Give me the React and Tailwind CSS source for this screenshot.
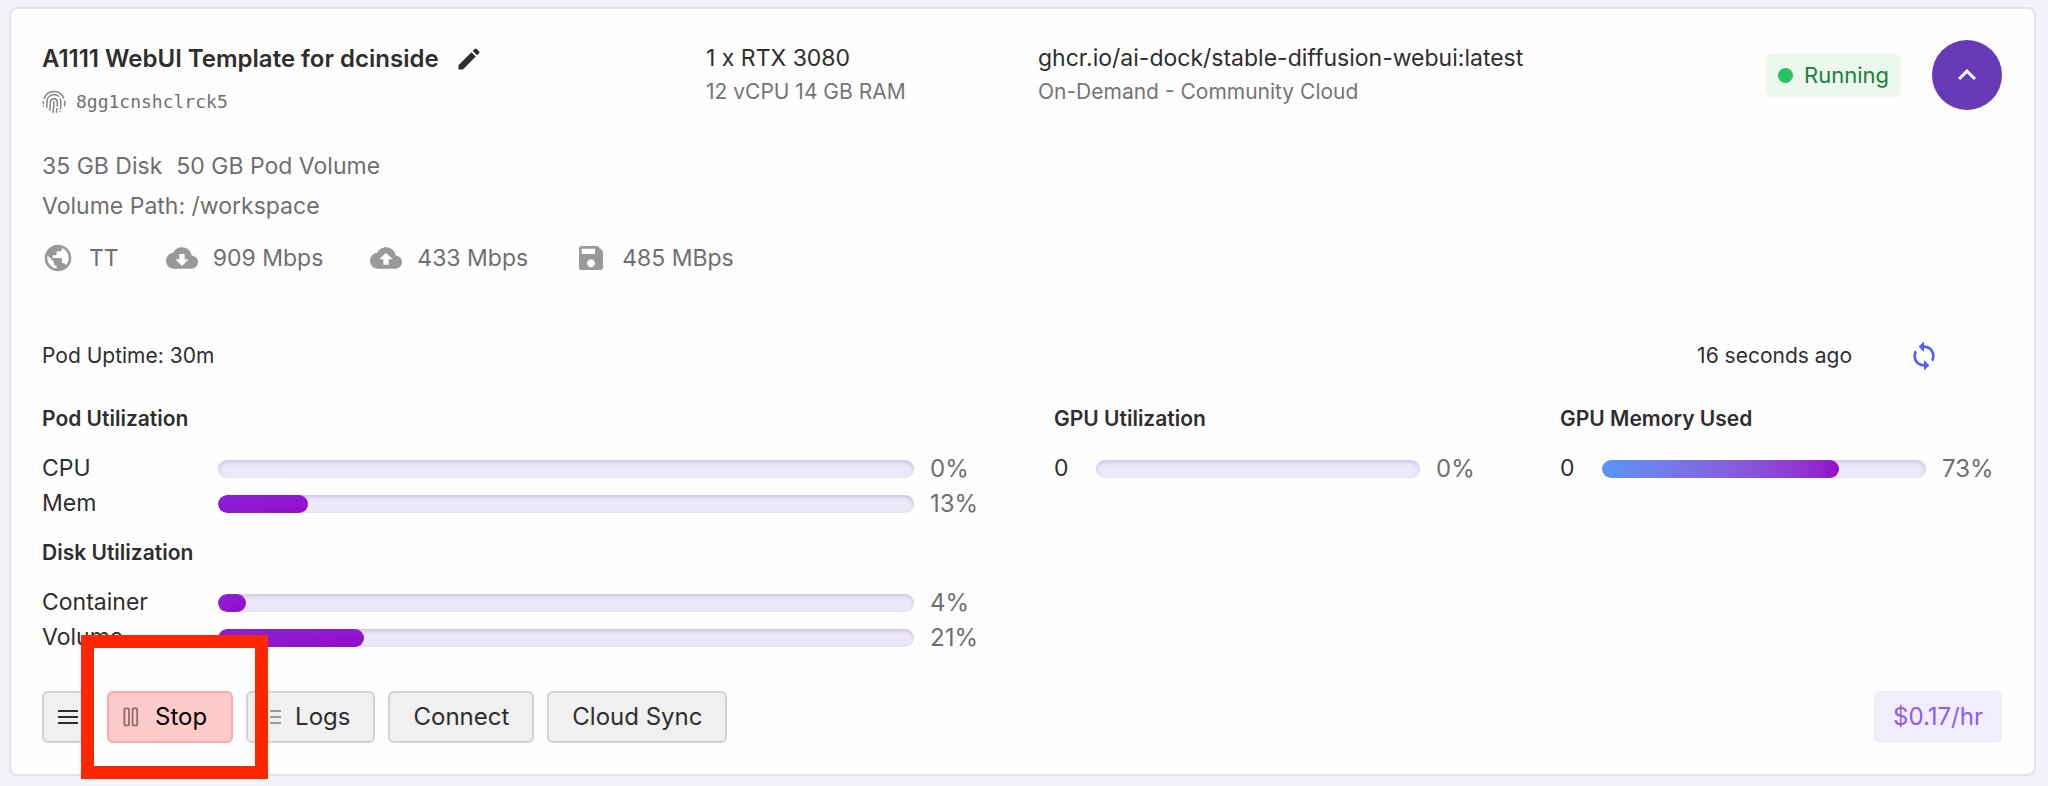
import {
  MdEdit,
  MdPublic,
  MdCloudDownload,
  MdBackup,
  MdSave,
  MdSync,
  MdKeyboardArrowUp,
} from 'react-icons/md';

const network = [
  { icon: MdPublic, text: 'TT' },
  { icon: MdCloudDownload, text: '909 Mbps' },
  { icon: MdBackup, text: '433 Mbps' },
  { icon: MdSave, text: '485 MBps' },
];

const podUsage = [
  { label: 'CPU', value: 0 },
  { label: 'Mem', value: 13 },
];

const diskUsage = [
  { label: 'Container', value: 4 },
  { label: 'Volume', value: 21 },
];

function FingerprintIcon() {
  return (
    <svg
      viewBox="0 0 24 24"
      className="size-6 text-[#858585]"
      fill="none"
      stroke="currentColor"
      strokeWidth="1.5"
      strokeLinecap="round"
      aria-hidden="true"
    >
      <path d="M2.2 8.4A10.4 10.4 0 0 1 21.6 8" />
      <path d="M22.8 11.2c.2 1.600.1 3-.1 4.600" />
      <path d="M1.300 11.800v1.400M1.300 15.800v.2" />
      <path d="M4.600 17.600c.7-2 .3-4 .5-6.200A6.900 6.900 0 0 1 16.600 6.300" />
      <path d="M18.500 9c.8 3.300.5 6.600-.1 9.800M18 21.400v.2" />
      <path d="M7.600 20.200c1-2.900.6-5.900.9-8.700a3.400 3.400 0 0 1 6.700 0c.1 1.500.1 3 0 4.500M14.900 18.600c-.1 1.200-.3 2.400-.6 3.600" />
      <path d="M11.900 11.800c.1 3.800-.1 7-1 10.600" />
    </svg>
  );
}

function MenuIcon() {
  return (
    <svg viewBox="0 0 20 16" className="w-5 h-4 shrink-0" stroke="currentColor" strokeWidth="2" aria-hidden="true">
      <path d="M0 2h20M0 8h20M0 14h20" />
    </svg>
  );
}

function PauseIcon() {
  return (
    <svg viewBox="0 0 16 20" className="w-4 h-5 text-[#8f6a6a]" fill="none" stroke="currentColor" strokeWidth="1.8" aria-hidden="true">
      <rect x="1.4" y="1.4" width="4.6" height="17" rx="1" />
      <rect x="9.6" y="1.4" width="4.6" height="17" rx="1" />
    </svg>
  );
}

function ListIcon() {
  return (
    <svg viewBox="0 0 20 16" className="w-5 h-4 text-[#999999]" stroke="currentColor" strokeWidth="1.8" aria-hidden="true">
      <path d="M1 2h3M1 8h3M1 14h3M9 2h11M9 8h11M9 14h11" />
    </svg>
  );
}

function UsageTitle({ children }) {
  return <h2 className="mb-4 text-[21px] leading-8 font-semibold">{children}</h2>;
}

function UsageBar({ label, value, labelClass = 'w-44', fill = 'bg-linear-to-br from-[#8a22d4] to-[#9508cb]' }) {
  return (
    <div className="flex items-center h-[35px]">
      <span className={`${labelClass} shrink-0 text-[23px]`}>{label}</span>
      <div className="flex-1 h-[18px] rounded-full bg-[#ede8f7] shadow-[inset_0_2px_4px_#cdc2e4] overflow-hidden">
        <div className={`h-full rounded-full ${fill}`} style={{ width: `${value}%` }} />
      </div>
      <span className="w-[76px] shrink-0 pl-4 text-2xl text-[#6f6f6f]">{value}%</span>
    </div>
  );
}

function ActionButton({ children, label, colors = 'bg-[#f0f0f0] border-[#d2d2d2]', spacing = 'px-[23px]' }) {
  return (
    <button
      type="button"
      aria-label={label}
      className={`flex items-center h-[52px] rounded-md border-2 text-2xl ${colors} ${spacing}`}
    >
      {children}
    </button>
  );
}

export default function App() {
  return (
    <main className="min-h-screen bg-[#f3f4f9] pl-[9px] pr-3 pt-[7px] pb-[9px] font-[Inter,sans-serif] text-[#2e2e2e]">
      <article className="rounded-lg border-2 border-[#e2e3e6] bg-[#fefefe] pl-[31px] pr-8 py-[31px]">
        <header className="grid grid-cols-12 gap-8">
          <div className="col-span-4">
            <div className="flex items-center gap-4 h-[38px]">
              <h1 className="text-2xl font-semibold whitespace-nowrap">A1111 WebUI Template for dcinside</h1>
              <button type="button" aria-label="Edit name">
                <MdEdit className="size-7" />
              </button>
            </div>
            <div className="flex items-center gap-[10px] mt-2 h-8 text-[#6f6f6f]">
              <FingerprintIcon />
              <span className="font-['DejaVu_Sans_Mono',monospace] text-lg">8gg1cnshclrck5</span>
            </div>
          </div>
          <div className="col-span-2">
            <p className="text-[23px] leading-9">1 x RTX 3080</p>
            <p className="text-[21px] leading-8 text-[#757575]">12 vCPU 14 GB RAM</p>
          </div>
          <div className="col-span-4">
            <p className="text-[23px] leading-9">ghcr.io/ai-dock/stable-diffusion-webui:latest</p>
            <p className="text-[21px] leading-8 text-[#757575]">On-Demand - Community Cloud</p>
          </div>
          <div className="col-span-2 flex items-start justify-end gap-[31px]">
            <span className="mt-[14px] flex items-center gap-[11px] h-[43px] px-3 rounded-md bg-[#ecf7ee] text-[22px] text-[#1b8039]">
              <span className="size-[15px] rounded-full bg-[#22c55e]" />
              Running
            </span>
            <button
              type="button"
              aria-label="Collapse"
              className="flex items-center justify-center size-[70px] rounded-full bg-[#673ab7] text-white"
            >
              <MdKeyboardArrowUp className="size-9" />
            </button>
          </div>
        </header>

        <section className="mt-7 text-[23px] text-[#6f6f6f]">
          <p className="flex gap-[14px] leading-10">
            <span>35 GB Disk</span>
            <span>50 GB Pod Volume</span>
          </p>
          <p className="leading-10">Volume Path: /workspace</p>
          <ul className="mt-4 flex items-center gap-[47px] h-8">
            {network.map(({ icon: Icon, text }) => (
              <li key={text} className="flex items-center gap-[15px]">
                <Icon className="size-8 text-[#999999]" />
                {text}
              </li>
            ))}
          </ul>
        </section>

        <div className="mt-[62px] pr-[62px] flex items-center justify-between h-10 text-[21px]">
          <span>Pod Uptime: 30m</span>
          <div className="flex items-center gap-14">
            <span>16 seconds ago</span>
            <button type="button" aria-label="Refresh">
              <MdSync className="size-8 text-[#4a62ff]" />
            </button>
          </div>
        </div>

        <section className="mt-[27px] grid grid-cols-4 gap-16">
          <div className="col-span-2">
            <UsageTitle>Pod Utilization</UsageTitle>
            {podUsage.map((u) => (
              <UsageBar key={u.label} {...u} />
            ))}
            <div className="mt-4">
              <UsageTitle>Disk Utilization</UsageTitle>
              {diskUsage.map((u) => (
                <UsageBar key={u.label} {...u} />
              ))}
            </div>
          </div>
          <div>
            <UsageTitle>GPU Utilization</UsageTitle>
            <UsageBar label="0" value={0} labelClass="w-[42px]" />
          </div>
          <div>
            <UsageTitle>GPU Memory Used</UsageTitle>
            <UsageBar label="0" value={73} labelClass="w-[42px]" fill="bg-linear-to-r from-[#5496f2] to-[#9508cb]" />
          </div>
        </section>

        <footer className="relative mt-9 flex items-center justify-between">
          <div className="flex gap-[13px]">
            <ActionButton label="More actions" spacing="px-[14px]">
              <MenuIcon />
            </ActionButton>
            <ActionButton colors="bg-[#ffcaca] border-[#ffa8a8] text-black" spacing="gap-4 pl-[14px] pr-6">
              <PauseIcon />
              Stop
            </ActionButton>
            <ActionButton spacing="gap-[14px] pl-[13px] pr-[23px]">
              <ListIcon />
              Logs
            </ActionButton>
            <ActionButton>Connect</ActionButton>
            <ActionButton>Cloud Sync</ActionButton>
          </div>
          <span className="flex items-center h-[52px] px-[19px] rounded-md bg-[#f2edfd] text-2xl text-[#8b5cf6]">$0.17/hr</span>
          {/* highlight around the Stop button */}
          <div className="absolute left-[39px] -top-14 w-[187px] h-36 border-[13px] border-[#ff2600] pointer-events-none" />
        </footer>
      </article>
    </main>
  );
}
